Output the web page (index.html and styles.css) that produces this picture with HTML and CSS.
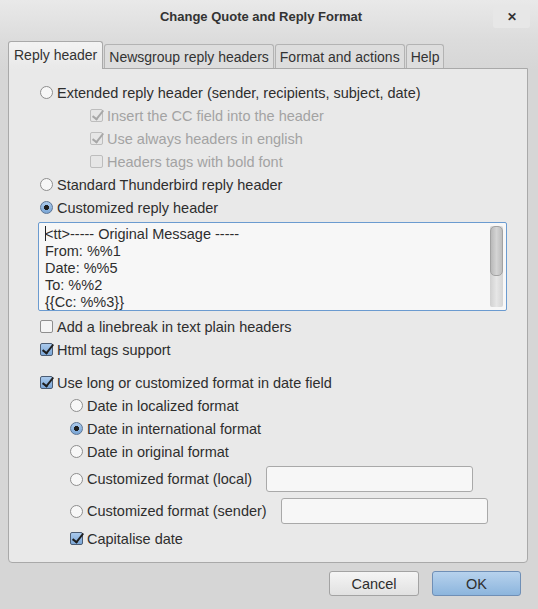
FILE: index.html
```html
<!DOCTYPE html>
<html lang="en">

<head>
  <meta charset="UTF-8" />
  <title>Change Quote and Reply Format</title>
  <link rel="stylesheet" href="styles.css">
</head>

<body>

  <div class="titlebar">
    <span class="title">Change Quote and Reply Format</span>
    <span class="close">&#x2715;</span>
  </div>

  <div class="tabs">
    <span class="tab activo">Reply header</span>
    <span class="tab">Newsgroup reply headers</span>
    <span class="tab">Format and actions</span>
    <span class="tab">Help</span>
  </div>

  <div class="panel">
    <div class="fila"><span class="radio"></span>Extended reply header (sender, recipients, subject, date)</div>
    <div class="fila sangria1 apagado"><span class="check on"></span>Insert the CC field into the header</div>
    <div class="fila sangria1 apagado"><span class="check on"></span>Use always headers in english</div>
    <div class="fila sangria1 apagado"><span class="check"></span>Headers tags with bold font</div>
    <div class="fila"><span class="radio"></span>Standard Thunderbird reply header</div>
    <div class="fila"><span class="radio on"></span>Customized reply header</div>

    <div class="editor">
      <div class="texto">
        <div><span class="cursor"></span>&lt;tt&gt;----- Original Message -----</div>
        <div>From: %%1</div>
        <div>Date: %%5</div>
        <div>To: %%2</div>
        <div>{{Cc: %%3}}</div>
      </div>
      <div class="scroll"><div class="pulgar"></div></div>
    </div>

    <div class="fila tras-editor"><span class="check"></span>Add a linebreak in text plain headers</div>
    <div class="fila"><span class="check on"></span>Html tags support</div>

    <div class="fila grupo"><span class="check on"></span>Use long or customized format in date field</div>
    <div class="fila sangria2"><span class="radio"></span>Date in localized format</div>
    <div class="fila sangria2"><span class="radio on"></span>Date in international format</div>
    <div class="fila sangria2"><span class="radio"></span>Date in original format</div>
    <div class="fila sangria2 alta"><span class="radio"></span>Customized format (local)<span class="campo"></span></div>
    <div class="fila sangria2 alta"><span class="radio"></span>Customized format (sender)<span class="campo"></span></div>
    <div class="fila sangria2"><span class="check on"></span>Capitalise date</div>
  </div>

  <div class="botones">
    <button class="boton">Cancel</button>
    <button class="boton ok">OK</button>
  </div>

</body>

</html>
```

FILE: styles.css
```css
body {
  font-family: "Liberation Sans", Arial, sans-serif;
  margin: 0;
  padding: 0;
  width: 538px;
  height: 609px;
  overflow: hidden;
  color: #2e2e2e;
  background: linear-gradient(#e9e9e9 0, #dcdcdc 40px, #d6d6d6 70px);
}

.titlebar {
  display: flex;
  align-items: center;
  height: 33px;
  padding: 0 8px 0 0;
  box-sizing: border-box;
}

.title {
  flex: 1;
  text-align: center;
  padding-left: 29px;
  font-size: 13px;
  font-weight: bold;
  color: #333;
}

.close {
  width: 37px;
  height: 22px;
  display: flex;
  align-items: center;
  justify-content: center;
  background: #e7e7e7;
  border-radius: 3px;
  font-size: 12px;
  font-weight: bold;
  color: #333;
}

.tabs {
  display: flex;
  align-items: flex-end;
  margin-top: 8px;
  padding-left: 8px;
  height: 27px;
  position: relative;
  z-index: 1;
}

.tab {
  height: 24px;
  box-sizing: border-box;
  padding: 0 4px;
  margin-left: 1px;
  border: 1px solid #b3b3b3;
  border-bottom: none;
  border-radius: 3px 3px 0 0;
  background: #dddddd;
  font-size: 14px;
  line-height: 24px;
  color: #333;
}

.tab.activo {
  height: 28px;
  margin-left: 0;
  margin-bottom: -1px;
  padding: 0 5px;
  line-height: 27px;
  border-color: #a9a9a9;
  background: linear-gradient(#f3f3f3, #e9e9e9);
}

.panel {
  margin: 0 10px 0 8px;
  height: 495px;
  box-sizing: border-box;
  padding: 12px 20px 0 31px;
  border: 1px solid #a9a9a9;
  border-radius: 0 0 4px 4px;
  background: #e9e9e9;
  font-size: 14.5px;
}

.fila {
  display: flex;
  align-items: center;
  gap: 4px;
  height: 23px;
  white-space: nowrap;
}

.sangria1 {
  margin-left: 50px;
}

.sangria2 {
  margin-left: 30px;
}

.apagado {
  color: #a3a3a3;
}

.alta {
  height: 32px;
}

.tras-editor {
  margin-top: 4px;
}

.grupo {
  margin-top: 10px;
}

.radio {
  flex: none;
  width: 13px;
  height: 13px;
  box-sizing: border-box;
  border: 1px solid #8e8e8e;
  border-radius: 50%;
  background: #f7f7f7;
}

.radio.on {
  border-color: #5d7594;
  background: radial-gradient(circle, #1f1f1f 0 2.3px, transparent 2.8px), linear-gradient(#abcaec, #79a5d5);
}

.check {
  flex: none;
  position: relative;
  width: 13px;
  height: 13px;
  box-sizing: border-box;
  border: 1px solid #8e8e8e;
  border-radius: 2px;
  background: #f4f4f4;
}

.check.on {
  border-color: #4b5c73;
  background: linear-gradient(#a9c9ec, #7ca7d7);
}

.check.on::after {
  content: "";
  position: absolute;
  left: 4px;
  top: -2px;
  width: 4px;
  height: 10px;
  border: solid #1e1e1e;
  border-width: 0 2px 2px 0;
  transform: rotate(38deg);
}

.apagado .check {
  border-color: #bdbdbd;
  background: #e6e6e6;
}

.apagado .check.on::after {
  border-color: #a7a7a7;
}

.editor {
  display: flex;
  margin: 3px 0 0 -2px;
  height: 89px;
  box-sizing: border-box;
  border: 1px solid #6b9bd0;
  border-radius: 2px;
  background: #f7f7f7;
  overflow: hidden;
}

.texto {
  flex: 1;
  padding: 3px 0 0 6px;
  line-height: 17px;
  overflow: hidden;
}

.cursor {
  display: inline-block;
  width: 1px;
  height: 15px;
  margin-right: -1px;
  vertical-align: -2px;
  background: #222;
}

.scroll {
  flex: none;
  width: 13px;
  margin: 3px 3px 3px 0;
  border-radius: 2px;
  background: linear-gradient(90deg, #d0d0d0, #e6e6e6, #d4d4d4);
}

.pulgar {
  height: 50px;
  box-sizing: border-box;
  border: 1px solid #a2a2a2;
  border-radius: 5px;
  background: linear-gradient(90deg, #b9b9b9, #d4d4d4, #bdbdbd);
}

.campo {
  width: 207px;
  height: 26px;
  margin-left: 10px;
  box-sizing: border-box;
  border: 1px solid #a9a9a9;
  border-radius: 3px;
  background: #f7f7f7;
}

.botones {
  display: flex;
  justify-content: flex-end;
  gap: 13px;
  padding: 8px 17px 0 0;
}

.boton {
  width: 90px;
  height: 25px;
  padding: 0;
  font-family: "Liberation Sans", Arial, sans-serif;
  font-size: 14.5px;
  color: #2e2e2e;
  border: 1px solid #a3a3a3;
  border-radius: 3px;
  background: linear-gradient(#f5f5f5, #e1e1e1);
}

.boton.ok {
  width: 89px;
  border-color: #6f8fb6;
  background: linear-gradient(#b7d2ed, #8cb5dd);
}
```
